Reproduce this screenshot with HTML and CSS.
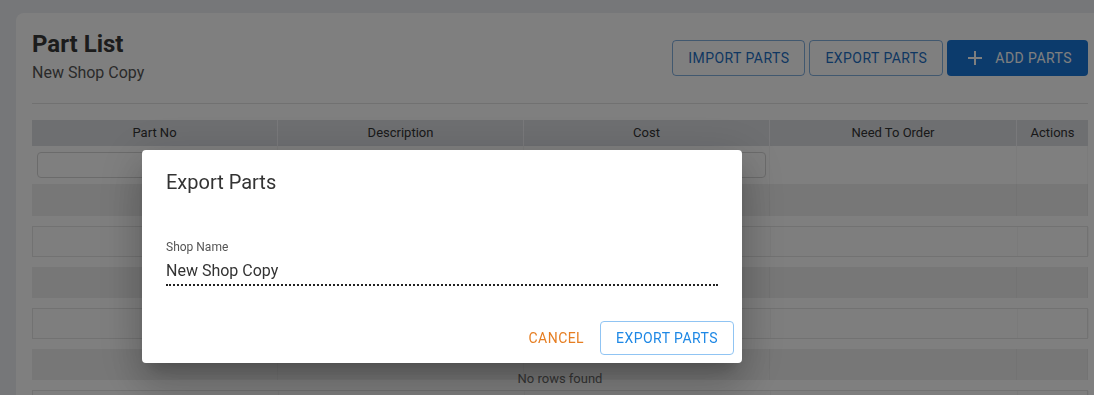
FILE: index.html
```html
<!DOCTYPE html>
<html lang="en">
<head>
    <meta charset="UTF-8">
    <meta name="viewport" content="width=device-width, initial-scale=1.0">
    <title>Part List</title>
    <link rel="stylesheet" href="styles.css">
</head>
<body>
    <div class="page">
        <section class="card">
            <header class="card-head">
                <div>
                    <h1 class="title">Part List</h1>
                    <div class="subtitle">New Shop Copy</div>
                </div>
                <div class="toolbar">
                    <button class="btn btn-outline">Import Parts</button>
                    <button class="btn btn-outline">Export Parts</button>
                    <button class="btn btn-filled">
                        <svg class="btn-icon" viewBox="0 0 24 24" width="24" height="24"><path d="M19 13h-6v6h-2v-6H5v-2h6V5h2v6h6v2z" fill="currentColor"/></svg>
                        Add Parts
                    </button>
                </div>
            </header>
            <hr class="divider">

            <div class="grid">
                <div class="grid-row grid-head">
                    <div class="cell">Part No</div>
                    <div class="cell">Description</div>
                    <div class="cell">Cost</div>
                    <div class="cell">Need To Order</div>
                    <div class="cell">Actions</div>
                </div>
                <div class="grid-row grid-filter">
                    <div class="cell"><input class="filter-input" type="text"></div>
                    <div class="cell"><input class="filter-input" type="text"></div>
                    <div class="cell"><input class="filter-input" type="text"></div>
                    <div class="cell"></div>
                    <div class="cell"></div>
                </div>
                <div class="grid-body">
                    <div class="grid-row skel skel-fill"><div class="cell"></div><div class="cell"></div><div class="cell"></div><div class="cell"></div><div class="cell"></div></div>
                    <div class="grid-row skel skel-line"><div class="cell"></div><div class="cell"></div><div class="cell"></div><div class="cell"></div><div class="cell"></div></div>
                    <div class="grid-row skel skel-fill"><div class="cell"></div><div class="cell"></div><div class="cell"></div><div class="cell"></div><div class="cell"></div></div>
                    <div class="grid-row skel skel-line"><div class="cell"></div><div class="cell"></div><div class="cell"></div><div class="cell"></div><div class="cell"></div></div>
                    <div class="grid-row skel skel-fill"><div class="cell"></div><div class="cell"></div><div class="cell"></div><div class="cell"></div><div class="cell"></div></div>
                    <div class="grid-row skel skel-line"><div class="cell"></div><div class="cell"></div><div class="cell"></div><div class="cell"></div><div class="cell"></div></div>
                    <div class="no-rows">No rows found</div>
                </div>
            </div>
        </section>
    </div>

    <div class="backdrop">
        <div class="dialog">
            <h2 class="dialog-title">Export Parts</h2>
            <div class="dialog-content">
                <label class="field-label" for="shop-name">Shop Name</label>
                <input class="field-input" id="shop-name" type="text" value="New Shop Copy" disabled>
            </div>
            <div class="dialog-actions">
                <button class="btn btn-text">Cancel</button>
                <button class="btn btn-outline btn-light">Export Parts</button>
            </div>
        </div>
    </div>
</body>
</html>
```

FILE: styles.css
```css
body {
    font-family: Roboto, "Liberation Sans", sans-serif;
    margin: 0;
    padding: 0;
    background-color: #eceef2;
    color: #333;
    overflow: hidden;
    height: 395px;
}

.page {
    padding: 13px 0 0 16px;
}

.card {
    width: 1056px;
    height: 382px;
    box-sizing: content-box;
    padding: 17px 16px 0 16px;
    margin-bottom: -17px;
    background-color: #fff;
    border-radius: 8px 8px 0 0;
    overflow: hidden;
}

.card-head {
    display: flex;
    justify-content: space-between;
    align-items: center;
}

.title {
    margin: 0;
    font-size: 24px;
    line-height: 29px;
    font-weight: 700;
    color: #383838;
}

.subtitle {
    margin-top: 2px;
    font-size: 16px;
    line-height: 24px;
    color: #555;
}

.toolbar {
    display: flex;
    gap: 4px;
    margin-top: 1px;
}

.btn {
    font-family: Roboto, "Liberation Sans", sans-serif;
    font-size: 14px;
    font-weight: 400;
    letter-spacing: 0.45px;
    text-transform: uppercase;
    line-height: 23px;
    padding: 5px 15px;
    border-radius: 4px;
    border: 1px solid transparent;
    background: none;
    cursor: pointer;
    display: inline-flex;
    align-items: center;
}

.btn-outline {
    color: #1e6fc4;
    border-color: rgba(30, 111, 196, 0.55);
}

.btn-filled {
    background-color: #1877d8;
    color: #fff;
    padding-left: 15px;
    padding-right: 15px;
}

.btn-icon {
    margin-right: 8px;
}

.divider {
    border: none;
    border-top: 1px solid #e2e2e2;
    margin: 18px 0 16px 0;
}

/* grid */
.grid-row {
    display: grid;
    grid-template-columns: 246px 246px 246px 247px 71px;
}

.grid-head {
    background-color: #dcdee3;
    height: 26px;
    font-size: 13px;
    line-height: 26px;
    color: #333;
}

.grid-head .cell {
    text-align: center;
    border-right: 1px solid #f2f3f6;
}

.grid-head .cell:last-child {
    border-right: none;
}

.grid-filter {
    height: 38px;
}

.grid-filter .cell {
    padding: 6px 3px 0 5px;
    border-right: 1px solid rgba(0, 0, 0, 0.03);
}

.filter-input {
    display: block;
    width: 100%;
    box-sizing: border-box;
    height: 26px;
    border: 1px solid #d6d6d6;
    border-radius: 4px;
    background: #fff;
}

.grid-body {
    position: relative;
}

.skel {
    height: 31px;
    margin-top: 10px;
    box-sizing: border-box;
}

.skel:first-child {
    margin-top: 0;
    height: 32px;
}

.skel-fill {
    background-color: #eeeeee;
}

.skel-line {
    border: 1px solid #e4e4e4;
    background-color: #fdfdfd;
}

.skel .cell {
    border-right: 1px solid rgba(0, 0, 0, 0.03);
}

.no-rows {
    position: absolute;
    left: 0;
    right: 0;
    top: 187px;
    text-align: center;
    font-size: 13px;
    line-height: 16px;
    color: #6a6a6a;
}

/* dialog */
.backdrop {
    position: fixed;
    inset: 0;
    background-color: rgba(0, 0, 0, 0.5);
}

.dialog {
    position: absolute;
    left: 142px;
    top: 150px;
    width: 600px;
    background-color: #fff;
    border-radius: 4px;
    box-shadow: 0 11px 15px -7px rgba(0, 0, 0, 0.2), 0 24px 38px 3px rgba(0, 0, 0, 0.14), 0 9px 46px 8px rgba(0, 0, 0, 0.12);
}

.dialog-title {
    margin: 0;
    padding: 16px 24px 0 24px;
    font-size: 20px;
    line-height: 32px;
    font-weight: 400;
    color: #333;
}

.dialog-content {
    padding: 41px 24px 27px 24px;
}

.field-label {
    display: block;
    font-size: 12px;
    line-height: 16px;
    color: #555;
}

.field-input {
    display: block;
    width: 100%;
    box-sizing: border-box;
    border: none;
    border-bottom: 2px dotted #222;
    padding: 4px 0 2px 0;
    height: 31px;
    font-family: Roboto, "Liberation Sans", sans-serif;
    font-size: 16px;
    line-height: 23px;
    color: #333;
    background: none;
    -webkit-text-fill-color: #333;
}

.dialog-actions {
    display: flex;
    justify-content: flex-end;
    gap: 8px;
    padding: 8px;
}

.btn-text {
    color: #e67e22;
    padding: 5px 8px;
    border: none;
    line-height: 24px;
}

.btn-light {
    color: #1e88e5;
    border-color: #90c4f3;
    line-height: 22px;
}
```
